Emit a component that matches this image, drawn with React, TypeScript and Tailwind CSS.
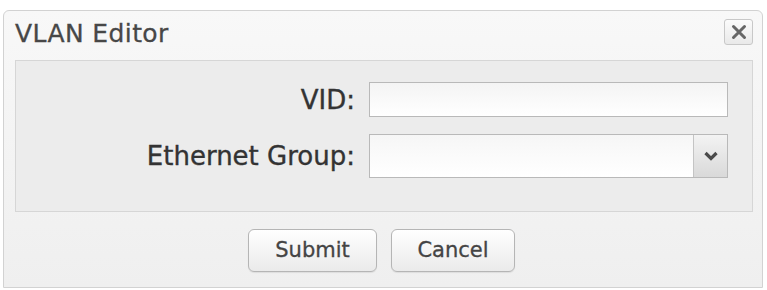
import React from "react";

export default function App() {
  const font = { fontFamily: '"DejaVu Sans", Verdana, sans-serif' };
  return (
    <div className="w-[767px] h-[290px] bg-white pt-[10px] pl-[3px] pr-[4px] pb-[2px]" style={font}>
      <div className="h-[278px] rounded-t-[6px] border border-[#d2d2d2] bg-gradient-to-b from-[#f8f8f8] to-[#efefef] flex flex-col">
        <div className="h-[49px] flex items-center justify-between pl-[11px] pr-[9px]">
          <span className="text-[25px] leading-none text-[#474747] tracking-[0.4px] -mt-[4px] [-webkit-text-stroke:0.3px_#474747]">VLAN Editor</span>
          <button className="w-[29px] h-[26px] -mt-[7px] rounded-[3px] border border-[#c8c8c8] bg-gradient-to-b from-[#fbfbfb] to-[#e9e9e9] flex items-center justify-center">
            <svg width="16" height="16" viewBox="0 0 16 16">
              <path d="M2.5 2.5 L13.5 13.5 M13.5 2.5 L2.5 13.5" stroke="#666" strokeWidth="3" strokeLinecap="round" />
            </svg>
          </button>
        </div>
        <div className="ml-[11px] mr-[9px] h-[152px] border border-[#d6d6d6] bg-[#ececec] pt-[21px] pr-[24px] flex flex-col gap-[17px]">
          <div className="flex items-center justify-end gap-[14px]">
            <span className="text-[26px] leading-none text-[#333] [-webkit-text-stroke:0.35px_#333]">VID:</span>
            <div className="w-[359px] h-[35px] border border-[#b9b9b9] bg-gradient-to-b from-[#f4f4f4] to-white" />
          </div>
          <div className="flex items-center justify-end gap-[14px]">
            <span className="text-[26px] leading-none text-[#333] [-webkit-text-stroke:0.35px_#333]">Ethernet Group:</span>
            <div className="w-[359px] h-[44px] border border-[#b9b9b9] bg-white flex">
              <div className="flex-1 bg-gradient-to-b from-[#f6f6f6] to-white" />
              <div className="w-[34px] h-full border-l border-[#c4c4c4] bg-gradient-to-b from-[#f3f3f3] to-[#d9d9d9] flex items-center justify-center">
                <svg width="16" height="12" viewBox="0 0 16 12">
                  <path d="M2.5 3 L8 8.5 L13.5 3" stroke="#4a4a4a" strokeWidth="3.2" fill="none" strokeLinejoin="miter" />
                </svg>
              </div>
            </div>
          </div>
        </div>
        <div className="flex justify-center gap-[14px] pt-[17px] pr-[3px]">
          <button className="w-[129px] h-[43px] rounded-[6px] border border-[#b5b5b5] bg-gradient-to-b from-white to-[#eaeaea] text-[21px] text-[#444] [-webkit-text-stroke:0.3px_#444] shadow-[0_1px_1px_rgba(0,0,0,0.08)]">Submit</button>
          <button className="w-[124px] h-[43px] rounded-[6px] border border-[#b5b5b5] bg-gradient-to-b from-white to-[#eaeaea] text-[21px] text-[#444] [-webkit-text-stroke:0.3px_#444] shadow-[0_1px_1px_rgba(0,0,0,0.08)]">Cancel</button>
        </div>
      </div>
    </div>
  );
}
